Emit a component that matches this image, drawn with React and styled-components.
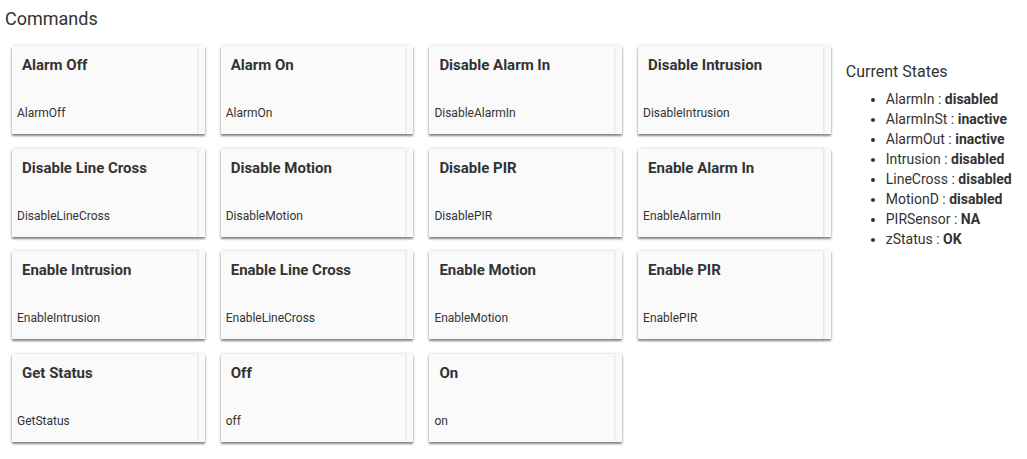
import React from "react";
import styled, { createGlobalStyle } from "styled-components";

const GlobalStyle = createGlobalStyle`
  body {
    margin: 0;
    background: #ffffff;
    font-family: Roboto, "Liberation Sans", sans-serif;
    color: #333333;
  }
`;

const Page = styled.div`
  display: flex;
  align-items: flex-start;
  width: 1027px;
  height: 459px;
  overflow: hidden;
`;

const Main = styled.div`
  padding: 8px 0 0 5px;
`;

const Heading = styled.h2`
  margin: 0;
  font-size: 18px;
  font-weight: 400;
  line-height: 21px;
  color: #333;
`;

const Grid = styled.div`
  display: grid;
  grid-template-columns: repeat(4, 192.7px);
  grid-auto-rows: 88px;
  column-gap: 16px;
  row-gap: 14.7px;
  margin: 17px 0 0 7px;
`;

const Tile = styled.div`
  position: relative;
  background: #fafafa;
  box-shadow: 0 2px 2px rgba(0, 0, 0, 0.45), 0 0 4px rgba(0, 0, 0, 0.12);
`;

const TileBody = styled.div`
  display: flex;
  flex-direction: column;
  justify-content: space-between;
  height: 100%;
  width: calc(100% - 8px);
  box-sizing: border-box;
  padding: 10px 0 14px 5px;
  box-shadow: 1px 0 2px rgba(0, 0, 0, 0.1);
`;

const Title = styled.div`
  padding-left: 5px;
  font-size: 15px;
  font-weight: 700;
  color: #333;
`;

const Command = styled.div`
  font-size: 12px;
  color: #333;
`;

const Side = styled.div`
  padding: 62px 0 0 15px;
`;

const SideTitle = styled.div`
  font-size: 16px;
  line-height: 19px;
  color: #333;
`;

const StateList = styled.ul`
  margin: 8px 0 0;
  padding-left: 40px;
  font-size: 14px;
  line-height: 20px;
`;

const commands = [
  ["Alarm Off", "AlarmOff"],
  ["Alarm On", "AlarmOn"],
  ["Disable Alarm In", "DisableAlarmIn"],
  ["Disable Intrusion", "DisableIntrusion"],
  ["Disable Line Cross", "DisableLineCross"],
  ["Disable Motion", "DisableMotion"],
  ["Disable PIR", "DisablePIR"],
  ["Enable Alarm In", "EnableAlarmIn"],
  ["Enable Intrusion", "EnableIntrusion"],
  ["Enable Line Cross", "EnableLineCross"],
  ["Enable Motion", "EnableMotion"],
  ["Enable PIR", "EnablePIR"],
  ["Get Status", "GetStatus"],
  ["Off", "off"],
  ["On", "on"],
];

const states = [
  ["AlarmIn", "disabled"],
  ["AlarmInSt", "inactive"],
  ["AlarmOut", "inactive"],
  ["Intrusion", "disabled"],
  ["LineCross", "disabled"],
  ["MotionD", "disabled"],
  ["PIRSensor", "NA"],
  ["zStatus", "OK"],
];

export default function App() {
  return (
    <>
      <GlobalStyle />
      <Page>
        <Main>
          <Heading>Commands</Heading>
          <Grid>
            {commands.map(([title, cmd]) => (
              <Tile key={cmd}>
                <TileBody>
                  <Title>{title}</Title>
                  <Command>{cmd}</Command>
                </TileBody>
              </Tile>
            ))}
          </Grid>
        </Main>
        <Side>
          <SideTitle>Current States</SideTitle>
          <StateList>
            {states.map(([name, value]) => (
              <li key={name}>
                {name} : <b>{value}</b>
              </li>
            ))}
          </StateList>
        </Side>
      </Page>
    </>
  );
}
